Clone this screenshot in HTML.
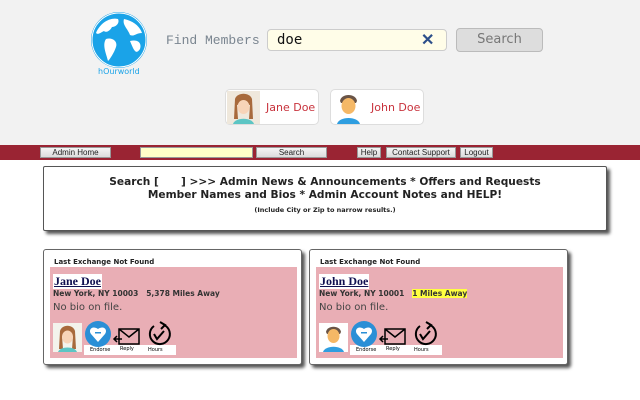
<!DOCTYPE html><html><head><style>
*{margin:0;padding:0;box-sizing:border-box}
body{width:640px;height:400px;background:#fff;font-family:"Liberation Sans",sans-serif;position:relative;overflow:hidden}
.a{position:absolute}
.top{left:0;top:0;width:640px;height:145px;background:#f2f2f2}
.bar{left:0;top:145px;width:640px;height:15px;background:#9a2433}
.btn{position:absolute;top:147px;height:11px;background:linear-gradient(#f4f4f4,#dcdcdc);border:1px solid #999;font-size:8px;color:#222;text-align:center;line-height:10px;white-space:nowrap}
.pill{position:absolute;top:89px;height:36px;background:#fff;border:1px solid #ddd;border-radius:5px;font-family:"DejaVu Sans",sans-serif;color:#c8323c;font-size:11px;white-space:nowrap}
.card{position:absolute;top:249px;width:259px;height:116px;background:#fff;border:1px solid #666;border-radius:3px;box-shadow:3px 3px 3px #555}
.card .h{position:absolute;left:10px;top:8px;font-size:7px;font-weight:bold;color:#222;font-family:"DejaVu Sans",sans-serif}
.pink{position:absolute;left:6px;top:17px;width:247px;height:91px;background:#e9aeb5}
.nm{position:absolute;left:3px;top:7px;background:#fff;font-family:"Liberation Serif",serif;font-weight:bold;font-size:12px;color:#101050;text-decoration:underline;padding:0 1px}
.loc{position:absolute;left:3px;top:22px;font-size:7.5px;font-weight:bold;color:#333;font-family:"DejaVu Sans",sans-serif;white-space:pre}
.bio{position:absolute;left:3px;top:35px;font-size:10px;color:#444;font-family:"DejaVu Sans",sans-serif}
.av{position:absolute;left:3px;top:56px;width:29px;height:29px;background:#f3f3ec}
.lab{position:absolute;left:34px;top:78px;width:92px;height:10px;background:#fff;font-size:5px;font-family:"DejaVu Sans",sans-serif}
</style></head><body>
<div class="a top"></div>
<svg class="a" style="left:90px;top:11px" width="58" height="58" viewBox="0 0 58 58"><circle cx="29" cy="29" r="28" fill="#1aa3e8"/><circle cx="29" cy="29" r="27" fill="none" stroke="#fff" stroke-width="1"/><path d="M6 22 C10 12 20 6 28 8 C30 12 26 16 22 16 C20 20 16 22 14 20 C10 22 8 24 6 22Z M16 28 C22 26 28 30 26 36 C24 42 20 48 18 50 C16 42 12 34 16 28Z M34 8 C44 10 50 16 52 22 C46 22 44 26 40 24 C38 18 32 14 34 8Z M40 30 C48 28 52 32 50 38 C46 44 44 40 40 30Z" fill="#fff"/></svg>
<div class="a" style="left:98px;top:67px;font-size:8px;color:#1aa3e8;font-family:'DejaVu Sans',sans-serif">hOurworld</div>
<div class="a" style="left:166px;top:33px;font-family:'Liberation Mono',monospace;font-size:13px;color:#7a8590">Find Members</div>
<div class="a" style="left:267px;top:29px;width:180px;height:22px;background:#fffde8;border:1px solid #ccc;border-radius:4px"></div>
<div class="a" style="left:277px;top:32px;font-family:'DejaVu Sans Mono',monospace;font-size:14px;color:#111">doe</div>
<div class="a" style="left:421px;top:30px;font-size:16px;font-weight:bold;color:#2c4f8a">✕</div>
<div class="a" style="left:456px;top:28px;width:87px;height:24px;background:#ddd;border:1px solid #bbb;border-radius:4px;font-family:'DejaVu Sans',sans-serif;color:#777;font-size:13px;text-align:center;line-height:22px">Search</div>
<div class="pill" style="left:225px;width:94px"><div class="a" style="left:1px;top:1px;width:33px;height:33px;background:#efe8dc"><svg width="33" height="33"><path d="M8 8 C10 1 23 1 25 8 L26 28 L22 28 L23 14 L10 14 L11 28 L7 28Z" fill="#a86a3c"/><ellipse cx="16.5" cy="16" rx="6" ry="7" fill="#f7d4b8"/><path d="M6 33 C8 26 25 26 27 33Z" fill="#5cc5c4"/></svg></div><span class="a" style="left:40px;top:11px">Jane Doe</span></div>
<div class="pill" style="left:330px;width:94px"><div class="a" style="left:1px;top:1px;width:33px;height:33px"><svg width="33" height="33"><path d="M8 10 C9 2 24 2 25 10 L24 12 L9 12Z" fill="#6a5446"/><ellipse cx="16.5" cy="15" rx="7" ry="8" fill="#f5b866"/><path d="M5 33 C7 25 26 25 28 33Z" fill="#2f9ee0"/></svg></div><span class="a" style="left:40px;top:11px">John Doe</span></div>
<div class="a bar"></div>
<div class="btn" style="left:40px;width:71px">Admin Home</div>
<div class="a" style="left:140px;top:147px;width:113px;height:11px;background:#ffffc8;border:1px solid #999"></div>
<div class="btn" style="left:256px;width:71px">Search</div>
<div class="btn" style="left:357px;width:24px">Help</div>
<div class="btn" style="left:386px;width:70px">Contact Support</div>
<div class="btn" style="left:460px;width:33px">Logout</div>
<div class="a" style="left:43px;top:166px;width:564px;height:65px;background:#fff;border:1px solid #555;border-radius:2px;box-shadow:3px 3px 3px #555;text-align:center;font-family:'DejaVu Sans',sans-serif;color:#222">
<div style="font-size:10.6px;font-weight:bold;margin-top:9px;line-height:13px;white-space:pre">Search [      ] &gt;&gt;&gt; Admin News &amp; Announcements * Offers and Requests<br>Member Names and Bios * Admin Account Notes and HELP!</div>
<div style="font-size:6.5px;font-weight:bold;margin-top:4px">(Include City or Zip to narrow results.)</div></div>

<div class="card" style="left:43px"><div class="h">Last Exchange Not Found</div><div class="pink">
<div class="nm">Jane Doe</div><div class="loc">New York, NY 10003   5,378 Miles Away</div><div class="bio">No bio on file.</div>
<div class="av"><svg width="29" height="29"><path d="M7 8 C9 1 20 1 22 8 L23 26 L19 26 L20 13 L9 13 L10 26 L6 26Z" fill="#a86a3c"/><ellipse cx="14.5" cy="14" rx="5.5" ry="6.5" fill="#f7d4b8"/><path d="M5 29 C7 23 22 23 24 29Z" fill="#5cc5c4"/></svg></div>
<div class="lab"><span class="a" style="left:6px;top:2px">Endorse</span><span class="a" style="left:36px;top:1px">Reply</span><span class="a" style="left:64px;top:2px">Hours</span></div>
<svg class="a" style="left:34px;top:53px" width="95" height="28"><circle cx="14" cy="14" r="13" fill="#2a8fd6"/><path d="M14 22 L7 14 C4 10 8 5 14 9 C20 5 24 10 21 14Z" fill="#fff"/><rect x="11" y="12" width="6" height="1.5" fill="#2a8fd6"/><path d="M35 9 L55 9 L55 24 L35 24 Z M35 9 L45 17 L55 9" fill="none" stroke="#000" stroke-width="1.5"/><path d="M38 19 L30 19 M33 16 L30 19 L33 22" fill="none" stroke="#000" stroke-width="1.5"/><path d="M80 5 A10 10 0 1 1 70 6" fill="none" stroke="#000" stroke-width="2"/><path d="M76 2 L81 5 L77 9" fill="none" stroke="#000" stroke-width="2"/><path d="M70 14 L73 19 L80 11" fill="none" stroke="#000" stroke-width="2"/></svg>
</div></div>

<div class="card" style="left:309px"><div class="h">Last Exchange Not Found</div><div class="pink">
<div class="nm">John Doe</div><div class="loc">New York, NY 10001   <span style="background:#ffff40">1 Miles Away</span></div><div class="bio">No bio on file.</div>
<div class="av" style="background:#fff"><svg width="29" height="29"><path d="M7 9 C8 2 21 2 22 9 L21 11 L8 11Z" fill="#6a5446"/><ellipse cx="14.5" cy="13" rx="6" ry="7" fill="#f5b866"/><path d="M4 29 C6 22 23 22 25 29Z" fill="#2f9ee0"/></svg></div>
<div class="lab"><span class="a" style="left:6px;top:2px">Endorse</span><span class="a" style="left:36px;top:1px">Reply</span><span class="a" style="left:64px;top:2px">Hours</span></div>
<svg class="a" style="left:34px;top:53px" width="95" height="28"><circle cx="14" cy="14" r="13" fill="#2a8fd6"/><path d="M14 22 L7 14 C4 10 8 5 14 9 C20 5 24 10 21 14Z" fill="#fff"/><rect x="11" y="12" width="6" height="1.5" fill="#2a8fd6"/><path d="M35 9 L55 9 L55 24 L35 24 Z M35 9 L45 17 L55 9" fill="none" stroke="#000" stroke-width="1.5"/><path d="M38 19 L30 19 M33 16 L30 19 L33 22" fill="none" stroke="#000" stroke-width="1.5"/><path d="M80 5 A10 10 0 1 1 70 6" fill="none" stroke="#000" stroke-width="2"/><path d="M76 2 L81 5 L77 9" fill="none" stroke="#000" stroke-width="2"/><path d="M70 14 L73 19 L80 11" fill="none" stroke="#000" stroke-width="2"/></svg>
</div></div>
</body></html>
